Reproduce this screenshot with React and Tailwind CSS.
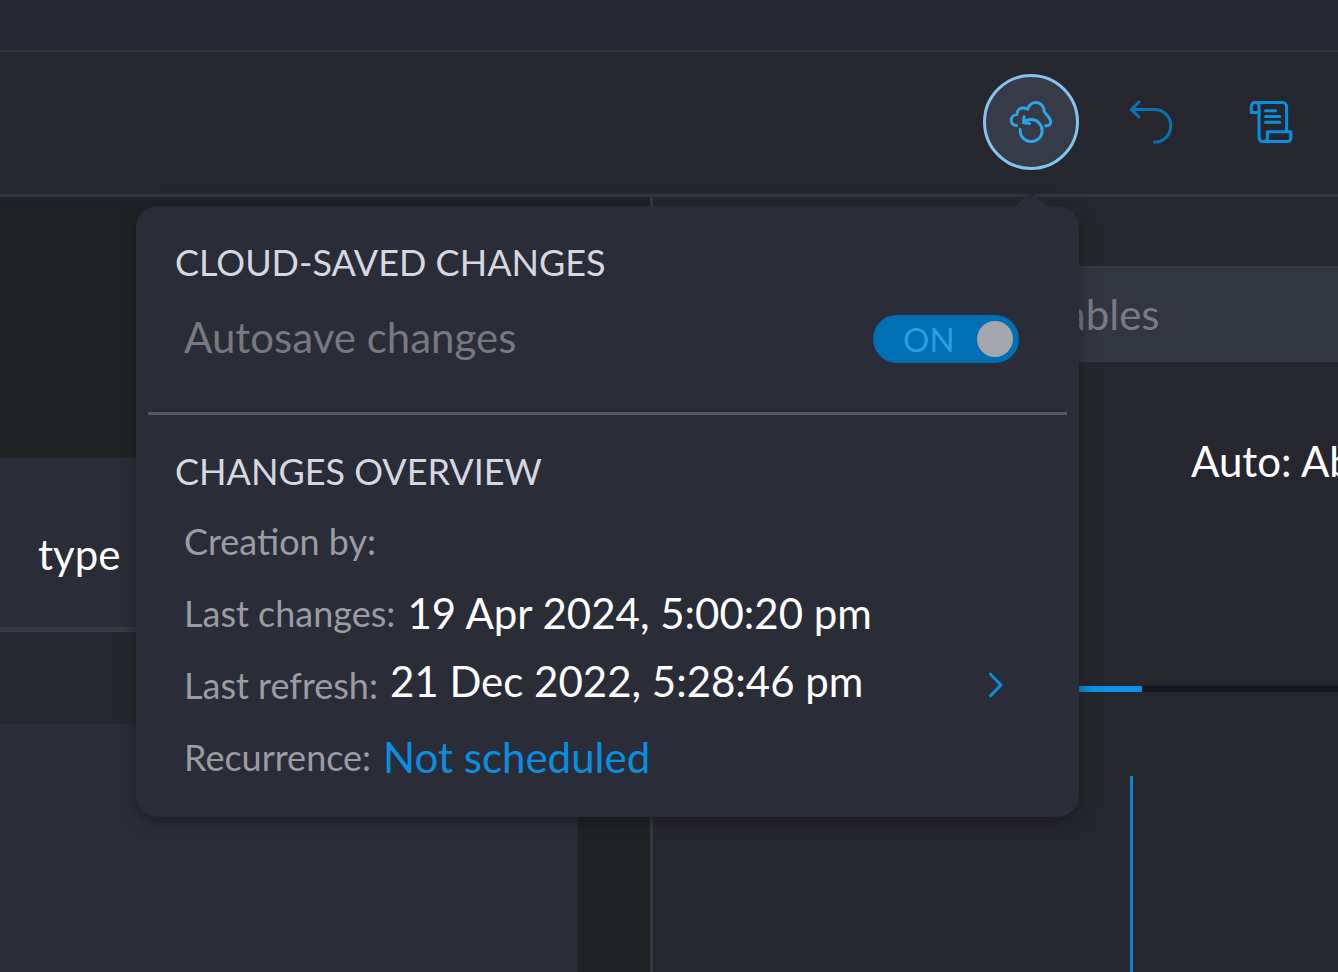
import React from "react";

function CloudRestoreIcon() {
  return (
    <svg viewBox="0 0 48 48" className="size-12" fill="none" stroke="currentColor" strokeWidth="3" strokeLinecap="round" strokeLinejoin="round" aria-hidden="true">
      <path d="M9.5 27.6C6 27.6 4.2 25 4.2 22.3C4.2 19.2 6.6 16.8 10 16.6C9.8 12.6 12.6 10 16 10C18 10 19.4 10.4 20.6 11.2C22 7 25.4 4.6 29 4.6C33.8 4.6 37.2 8.4 37.2 13.6C39 16.6 43.8 20 43.8 24C43.8 26.4 41.6 27.8 38.6 27.8" />
      <path d="M13.2 31.6A11 11 0 1 0 24.2 21.6C21.4 21.4 18.8 22.6 17 24.2" />
      <path d="M17.2 18.8L16.4 24.6L22.4 25.6" />
    </svg>
  );
}

function UndoIcon() {
  return (
    <svg viewBox="0 0 48 48" className="size-12" fill="none" stroke="currentColor" strokeWidth="3" strokeLinecap="round" strokeLinejoin="round" aria-hidden="true">
      <path d="M12 4L4.4 11.5L12 19" />
      <path d="M4.6 11.5H27.5A16.3 16.3 0 0 1 27.5 44.1" />
    </svg>
  );
}

function ScrollIcon() {
  return (
    <svg viewBox="0 0 48 48" className="size-12" fill="none" stroke="currentColor" strokeWidth="3" strokeLinecap="round" strokeLinejoin="round" aria-hidden="true">
      <path d="M12 14.4H4.3V8A3.6 3.6 0 0 1 7.9 4.4H35.6A4 4 0 0 1 39.6 8.4V33.6" />
      <path d="M8.1 4.4A3.8 3.8 0 0 1 12 8.2V39.8A3.8 3.8 0 0 0 15.8 43.6H40.3A3.5 3.5 0 0 0 43.8 40.1V33.7H20.4V39.4A4.2 4.2 0 0 1 16.2 43.6" />
      <path d="M18.6 12.7H28.6M18.6 18.4H32.8M18.6 24.2H32.8" />
    </svg>
  );
}

function ChevronIcon() {
  return (
    <svg viewBox="0 0 16 26" className="h-[26px] w-4" fill="none" stroke="currentColor" strokeWidth="3" strokeLinecap="round" strokeLinejoin="round" aria-hidden="true">
      <path d="M2.5 2.2L13 13L2.5 23.8" />
    </svg>
  );
}

function Popover() {
  return (
    <section
      aria-label="Cloud-saved changes"
      className="absolute right-0 top-full z-10 mt-9 w-[943px] rounded-[22px] bg-[#2a2c37] pb-6 pt-7 shadow-[0_4px_16px_rgba(20,22,24,0.55)]"
    >
      <svg viewBox="0 0 32 14" className="absolute -top-[13px] right-8 h-3.5 w-8 text-[#2a2c37]" fill="currentColor" aria-hidden="true">
        <path d="M0 14L11 3Q16-2 21 3L32 14Z" />
      </svg>
      <h2 className="px-[39px] text-4xl leading-[56px] text-[#d5d7e1]">CLOUD-SAVED CHANGES</h2>
      <div className="flex items-center justify-between pb-[22px] pl-12 pr-[60px] pt-[11px]">
        <label htmlFor="autosave" className="pb-1 text-[42px] leading-[72px] text-[#777980]">Autosave changes</label>
        <span className="relative flex h-12 w-[146px] items-center justify-between rounded-full bg-[#006fb3] pl-[30px] pr-1.5">
          <input id="autosave" type="checkbox" role="switch" defaultChecked className="absolute inset-0 size-full opacity-0" />
          <span className="text-[33px] leading-[48px] text-[#2a9fe2]">ON</span>
          <span className="size-9 rounded-full bg-[#a4a6ad]" />
        </span>
      </div>
      <hr className="mx-3 mt-[13px] border-t-[3px] border-[#555762]" />
      <h2 className="px-[39px] pt-7 text-4xl leading-[56px] text-[#d5d7e1]">CHANGES OVERVIEW</h2>
      <dl className="px-12 pt-1.5 text-4xl text-[#9a9ca4]">
        <div className="flex h-[72px] items-center gap-3">
          <dt>Creation by:</dt>
          <dd />
        </div>
        <div className="flex h-[72px] items-center gap-3">
          <dt>Last changes:</dt>
          <dd className="text-[42px] text-white">19 Apr 2024, 5:00:20 pm</dd>
        </div>
        <div className="flex h-[72px] items-center gap-3">
          <dt>Last refresh:</dt>
          <dd className="flex flex-1 items-center justify-between self-start text-[42px] leading-[64px] text-white">
            21 Dec 2022, 5:28:46 pm
            <button type="button" aria-label="Show refresh history" className="mr-[27px] mt-2 text-[#0a8fe0]">
              <ChevronIcon />
            </button>
          </dd>
        </div>
        <div className="flex h-[72px] items-center gap-3">
          <dt>Recurrence:</dt>
          <dd className="text-[42px]">
            <a href="#schedule" className="text-[#0a8fe0]">Not scheduled</a>
          </dd>
        </div>
      </dl>
    </section>
  );
}

export default function App() {
  return (
    <div className="flex h-screen flex-col overflow-hidden bg-[#26272e] font-[Lato,Carlito,sans-serif] text-white">
      <div className="h-[52px] shrink-0 border-b-2 border-[#303238] bg-[#24272f]" />
      <header className="flex h-[145px] shrink-0 items-start justify-end gap-6 border-b-[3px] border-[#34363d] pr-[19px] pt-[22px]">
        <div className="relative">
          <button type="button" aria-label="Cloud-saved changes" className="flex size-24 items-center justify-center rounded-full border-[3px] border-[#80c4f0] bg-[#373b47] text-[#2ea3e8]">
            <CloudRestoreIcon />
          </button>
          <Popover />
        </div>
        <button type="button" aria-label="Undo" className="flex size-24 items-center justify-center text-[#0873b3]">
          <UndoIcon />
        </button>
        <button type="button" aria-label="Change log" className="flex size-24 items-center justify-center text-[#0a8fe0]">
          <ScrollIcon />
        </button>
      </header>
      <main className="flex min-h-0 flex-1">
        <div className="flex w-[650px] shrink-0 flex-col bg-[#202224] pr-[72px]">
          <div className="-mr-[72px] h-[11px] shrink-0 bg-gradient-to-b from-[#1d2127] to-[#202224]" />
          <div className="mt-[250px] flex h-[174px] shrink-0 items-center border-b-[5px] border-[#363843] bg-[#2a2c37] pl-[38px] pt-6 text-[42px]">type</div>
          <div className="h-[92px] shrink-0 bg-[#26272e]" />
          <div className="flex-1 bg-[#2a2c37]" />
        </div>
        <aside className="flex min-w-0 flex-1 flex-col border-l-[3px] border-[#363840] bg-[#26272e]">
          <div className="h-[11px] shrink-0 bg-gradient-to-b from-[#222730] to-[#26272e]" />
          <input
            type="search"
            aria-label="Search variables"
            placeholder="Search variables"
            className="ml-12 mt-[58px] h-24 shrink-0 appearance-none border-y-2 border-[#373a42] bg-[#323641] pl-[163px] text-[42px] placeholder:text-[#7a7c85] placeholder:opacity-100"
          />
          <div className="flex h-[324px] shrink-0 overflow-hidden whitespace-nowrap pl-[538px] pt-[67px] text-[42px] leading-[64px]">
            Auto: Ab
          </div>
          <div className="h-1.5 shrink-0 bg-[#15171a]">
            <div className="h-full w-[489px] bg-[#0a91e6]" />
          </div>
          <div className="ml-[477px] mt-[84px] flex-1 border-l-[3px] border-[#0a84cc]" />
        </aside>
      </main>
    </div>
  );
}
